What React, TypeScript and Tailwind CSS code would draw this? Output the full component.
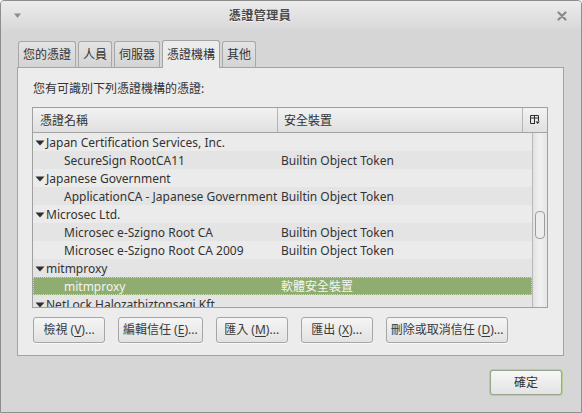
import React from "react";

const FONT = '"Noto Sans", "Noto Sans CJK TC", sans-serif';

type Row = {
  name: string;
  device?: string;
  parent?: boolean;
  selected?: boolean;
};

const rows: Row[] = [
  { name: "Japan Certification Services, Inc.", parent: true },
  { name: "SecureSign RootCA11", device: "Builtin Object Token" },
  { name: "Japanese Government", parent: true },
  { name: "ApplicationCA - Japanese Government", device: "Builtin Object Token" },
  { name: "Microsec Ltd.", parent: true },
  { name: "Microsec e-Szigno Root CA", device: "Builtin Object Token" },
  { name: "Microsec e-Szigno Root CA 2009", device: "Builtin Object Token" },
  { name: "mitmproxy", parent: true },
  { name: "mitmproxy", device: "軟體安全裝置", selected: true },
  { name: "NetLock Halozatbiztonsagi Kft.", parent: true },
];

function Expander() {
  return (
    <svg width="10" height="6" viewBox="0 0 10 6" className="shrink-0">
      <path d="M0.5 0.5 H9.5 L5 5.5 Z" fill="#2e2e2e" />
    </svg>
  );
}

function Btn({ pre, key1, post }: { pre: string; key1: string; post: string }) {
  return (
    <div className="h-[26px] min-w-[72px] px-[4px] flex items-center justify-center rounded-[3px] border border-[#a6a6a6] bg-gradient-to-b from-[#f5f5f5] to-[#e2e2e2] text-[12px] text-[#3a3a3a] shadow-[0_1px_0_rgba(255,255,255,0.7)]">
      <span className="whitespace-nowrap">
        {pre}
        <span className="underline underline-offset-2">{key1}</span>
        {post}
      </span>
    </div>
  );
}

function Tab({ label, active }: { label: string; active?: boolean }) {
  if (active) {
    return (
      <div className="h-[28px] -mb-px px-[4px] flex items-center rounded-t-[3px] border border-b-0 border-[#a3a3a3] bg-[#ececec] text-[12px] text-[#333] relative z-10">
        {label}
      </div>
    );
  }
  return (
    <div className="h-[26px] px-[4px] flex items-center rounded-t-[3px] border border-b-0 border-[#a8a8a8] bg-gradient-to-b from-[#e4e4e4] to-[#d4d4d4] text-[12px] text-[#333]">
      {label}
    </div>
  );
}

export default function App() {
  return (
    <div
      className="w-[582px] h-[413px] bg-[#d6d6d6] border border-[#8e8e8e] rounded-t-[4px] flex flex-col overflow-hidden"
      style={{ fontFamily: FONT }}
    >
      {/* title bar */}
      <div className="h-[29px] shrink-0 flex items-center justify-between px-[12px] bg-gradient-to-b from-[#ececec] to-[#d8d8d8]">
        <svg width="10" height="6" viewBox="0 0 10 6">
          <path d="M1 0.5 H8 L4.5 5 Z" fill="#8c8c8c" />
        </svg>
        <div className="mr-[60px] text-[12px] font-bold text-[#4a4a4a] [text-shadow:0_1px_0_rgba(255,255,255,0.8)] tracking-[0.5px]">
          憑證管理員
        </div>
        <svg width="10" height="10" viewBox="0 0 10 10" className="mr-[2px]">
          <path d="M1.5 1.5 L8.5 8.5 M8.5 1.5 L1.5 8.5" stroke="#8a8a8a" strokeWidth="2.2" strokeLinecap="round" />
        </svg>
      </div>

      <div className="flex flex-col pl-[16px] pr-[17px] pt-[10px]">
        {/* tabs */}
        <div className="flex items-end gap-[2px] h-[27px] pl-px">
          <Tab label="您的憑證" />
          <Tab label="人員" />
          <Tab label="伺服器" />
          <Tab label="憑證機構" active />
          <Tab label="其他" />
        </div>

        {/* tab page */}
        <div className="h-[289px] border border-[#a3a3a3] bg-[#ececec] flex flex-col pl-[14px] pr-[15px] pt-[11px]">
          <div className="text-[12px] text-[#333] h-[20px] leading-[20px] pl-[1px]">
            您有可識別下列憑證機構的憑證:
          </div>

          {/* tree view */}
          <div className="mt-[8px] h-[201px] shrink-0 border border-[#a0a0a0] bg-[#ebebeb] flex flex-col overflow-hidden">
            <div className="h-[25px] shrink-0 flex border-b border-[#a3a3a3] bg-gradient-to-b from-[#f2f2f2] to-[#e0e0e0] text-[12px] text-[#333]">
              <div className="w-[245px] flex items-center pt-[1px] pl-[7px] border-r border-[#b5b5b5]">憑證名稱</div>
              <div className="flex-1 flex items-center pt-[1px] pl-[6px] border-r border-[#b5b5b5]">安全裝置</div>
              <div className="w-[24px] flex items-center justify-center">
                <svg width="10" height="10" viewBox="0 0 10 10">
                  <path d="M0.5 0.5 H8.5 V6 M0.5 0.5 V8.5 H5 M0.5 3 H8.5 M4.5 0.5 V8.5" stroke="#2e2e2e" strokeWidth="1" fill="none" />
                  <path d="M5.5 6.5 H9.8 L7.65 9 Z" fill="#2e2e2e" />
                </svg>
              </div>
            </div>
            <div className="flex flex-1 min-h-0">
              <div className="flex-1 flex flex-col overflow-hidden">
                {rows.map((r, i) => (
                  <div
                    key={i}
                    className={
                      "h-[18px] shrink-0 flex items-center pt-[1px] text-[12px] " +
                      (r.selected
                        ? "bg-[#8fad70] text-[#f4f4f4] outline outline-1 outline-dotted outline-[#e8d26a] -outline-offset-1"
                        : i % 2 === 1
                        ? "bg-[#e4e4e4] text-[#333]"
                        : "bg-[#ebebeb] text-[#333]")
                    }
                  >
                    {r.parent ? (
                      <div className="flex items-center pl-[2px] gap-[1px] whitespace-nowrap">
                        <Expander />
                        <span>{r.name}</span>
                      </div>
                    ) : (
                      <>
                        <div className="w-[245px] shrink-0 pl-[31px] whitespace-nowrap overflow-hidden">{r.name}</div>
                        <div className="pl-[3px] whitespace-nowrap">{r.device}</div>
                      </>
                    )}
                  </div>
                ))}
              </div>
              {/* scrollbar */}
              <div className="w-[15px] shrink-0 border-l border-[#b8b8b8] bg-gradient-to-r from-[#e2e2e2] via-[#f0f0f0] to-[#e6e6e6] pt-[78px] pl-[2px]">
                <div className="w-[10px] h-[28px] rounded-[4px] border border-[#9c9c9c] bg-[#ededed]" />
              </div>
            </div>
          </div>

          {/* action buttons */}
          <div className="mt-[9px] flex gap-[13px] pl-[1px]">
            <Btn pre="檢視 (" key1="V" post=")..." />
            <Btn pre="編輯信任 (" key1="E" post=")..." />
            <Btn pre="匯入 (" key1="M" post=")..." />
            <Btn pre="匯出 (" key1="X" post=")..." />
            <Btn pre="刪除或取消信任 (" key1="D" post=")..." />
          </div>
        </div>

        {/* dialog buttons */}
        <div className="flex justify-end mt-[13px] pr-[1px]">
          <div className="rounded-[4px] p-[1px] bg-[#b4d194]">
            <div className="w-[72px] h-[25px] flex items-center justify-center rounded-[3px] border border-[#9aa58f] bg-gradient-to-b from-[#f7f7f7] to-[#e3e3e3] text-[12px] text-[#333]">
              確定
            </div>
          </div>
        </div>
      </div>
    </div>
  );
}
